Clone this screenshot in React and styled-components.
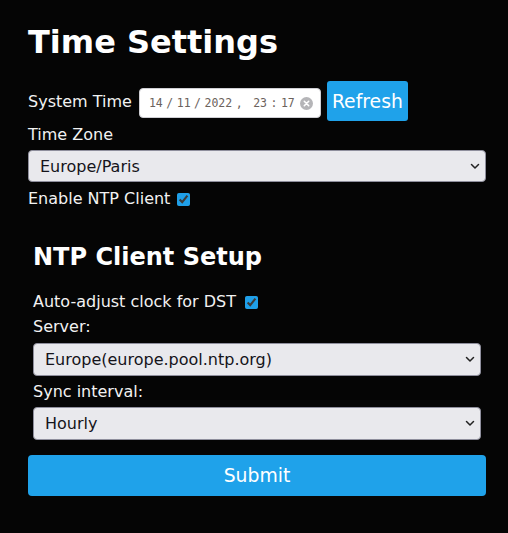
import styled, { createGlobalStyle } from 'styled-components';

const GlobalStyle = createGlobalStyle`
    html, body {
        margin: 0;
        padding: 0;
        background: #050505;
    }
    body {
        font-family: "DejaVu Sans", "Noto Sans", sans-serif;
        color: #f2f2f2;
    }
`;

const Chevron = () => (
    <ChevronIcon width="10" height="7" viewBox="0 0 10 7">
        <path d="M1.5 1.5 L5 5 L8.5 1.5" fill="none" stroke="#222" strokeWidth="1.5" strokeLinecap="round" strokeLinejoin="round" />
    </ChevronIcon>
);

const ClearIcon = () => (
    <ClearSvg width="13" height="13" viewBox="0 0 13 13">
        <circle cx="6.5" cy="6.5" r="6.5" fill="#b5b5b8" />
        <path d="M4.3 4.3 L8.7 8.7 M8.7 4.3 L4.3 8.7" stroke="#fff" strokeWidth="1.6" strokeLinecap="round" />
    </ClearSvg>
);

const Dropdown = ({ value, options }) => (
    <SelectWrap>
        <Select defaultValue={value}>
            {options.map(o => <option key={o}>{o}</option>)}
        </Select>
        <Chevron />
    </SelectWrap>
);

const App = () => {
    return (
        <Page>
            <GlobalStyle />
            <Title>Time Settings</Title>

            <TimeRow>
                <span>System Time</span>
                <DateField>
                    <DateText>
                        <span>14</span><span>/</span><span>11</span><span>/</span><span>2022</span>
                        <span>,</span>
                        <TimePart>23</TimePart><span>:</span><span>17</span>
                    </DateText>
                    <ClearIcon />
                </DateField>
                <BlueButton>Refresh</BlueButton>
            </TimeRow>

            <Label $top={5}>Time Zone</Label>
            <Spacer $h={5.4} />
            <Dropdown value="Europe/Paris" options={['Europe/Paris', 'Europe/London', 'UTC']} />

            <CheckRow $top={8}>
                Enable NTP Client <Check type="checkbox" defaultChecked />
            </CheckRow>

            <Section>
                <SubTitle>NTP Client Setup</SubTitle>
                <CheckRow $top={22.4}>
                    Auto-adjust clock for DST <Check type="checkbox" defaultChecked $extra={2} />
                </CheckRow>
                <Label $top={6.4}>Server:</Label>
                <Spacer $h={6} />
                <Dropdown value="Europe(europe.pool.ntp.org)" options={['Europe(europe.pool.ntp.org)', 'Global(pool.ntp.org)']} />
                <Label $top={7.5}>Sync interval:</Label>
                <Spacer $h={5.5} />
                <Dropdown value="Hourly" options={['Hourly', 'Daily', 'Weekly']} />
            </Section>

            <SubmitButton>Submit</SubmitButton>
        </Page>
    );
};

export default App;


const Page = styled.div`
    min-height: 533px;
    box-sizing: border-box;
    width: 486px;
    padding: 24px 0 30px 28px;
    display: flex;
    flex-direction: column;
`;

const Title = styled.h1`
    margin: 0;
    font-size: 32px;
    font-weight: bold;
    line-height: 37px;
    color: #fff;
`;

const SubTitle = styled.h2`
    margin: 0;
    font-size: 24px;
    font-weight: bold;
    line-height: 28px;
    color: #fff;
`;

const TimeRow = styled.div`
    margin-top: 20px;
    height: 40px;
    display: flex;
    align-items: center;
    gap: 6px;
    font-size: 16px;
`;

const DateField = styled.div`
    box-sizing: border-box;
    width: 182px;
    height: 30px;
    margin-top: 4px;
    margin-left: 1px;
    background: #fff;
    border: 1px solid #cfcfd4;
    border-radius: 4px;
    display: flex;
    align-items: center;
    padding: 0 8px 0 9px;
    gap: 5px;
`;

const DateText = styled.div`
    display: flex;
    align-items: center;
    gap: 3.5px;
    font-family: "DejaVu Sans Mono", monospace;
    font-size: 11.5px;
    color: #6b625c;
    white-space: nowrap;
`;

const TimePart = styled.span`
    margin-left: 7px;
`;

const ClearSvg = styled.svg`
    flex-shrink: 0;
`;

const BlueButton = styled.button`
    height: 40px;
    padding: 0 5px;
    border: none;
    border-radius: 3px;
    background: #1fa2ea;
    color: #fff;
    font-family: "DejaVu Sans", sans-serif;
    font-size: 18.8px;
`;

const Label = styled.div`
    margin-top: ${p => p.$top}px;
    font-size: 16px;
    line-height: 18.6px;
`;

const Spacer = styled.div`
    height: ${p => p.$h}px;
`;

const CheckRow = styled.label`
    margin-top: ${p => p.$top}px;
    display: flex;
    align-items: center;
    font-size: 16px;
    line-height: 18.6px;
    white-space: pre;
`;

const Check = styled.input`
    width: 13px;
    height: 13px;
    margin: 0 0 0 ${p => 2 + (p.$extra || 0)}px;
    accent-color: #1f9fe8;
`;

const Section = styled.div`
    margin-top: 34px;
    padding: 0 5px;
    display: flex;
    flex-direction: column;
`;

const SelectWrap = styled.div`
    position: relative;
`;

const Select = styled.select`
    box-sizing: border-box;
    width: 100%;
    height: 32.5px;
    appearance: none;
    background: #e9e9ed;
    border: 1px solid #8f8f9d;
    border-radius: 4px;
    padding: 0 24px 0 11px;
    font-family: "DejaVu Sans", sans-serif;
    font-size: 16px;
    color: #15141a;
`;

const ChevronIcon = styled.svg`
    position: absolute;
    right: 6px;
    top: 13px;
    pointer-events: none;
`;

const SubmitButton = styled(BlueButton)`
    margin-top: 15.3px;
    height: 40.7px;
    width: 100%;
    border-radius: 4px;
`;
